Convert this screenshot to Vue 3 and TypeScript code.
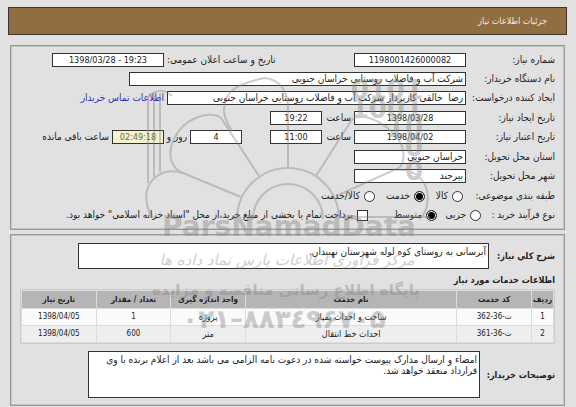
<script setup lang="ts">
import { ref } from 'vue'

interface ServiceRow {
  index: number
  code: string
  name: string
  unit: string
  amount: number
  date: string
}

const services: ServiceRow[] = [
  { index: 1, code: 'ث-36-362', name: 'ساخت و احداث پمپاژ', unit: 'پروژه', amount: 1, date: '1398/04/05' },
  { index: 2, code: 'ث-36-361', name: 'احداث خط انتقال', unit: 'متر', amount: 600, date: '1398/04/05' },
]

const subject = ref('service')
const process = ref('medium')
const treasury = ref(false)
const summary = ref('آبرسانی به روستای کوه لوله شهرستان نهبندان.')
const notes = ref(
  'امضاء و ارسال مدارک پیوست خواسته شده در دعوت نامه الزامی می باشد بعد از اعلام برنده با وی قرارداد منعقد خواهد شد.',
)
</script>

<template>
  <main class="page" dir="rtl">
    <header class="title"><h1>جزئیات اطلاعات نیاز</h1></header>

    <section class="panel details">
      <div class="group">
        <div class="row number-row">
          <label for="number">شماره نیاز:</label>
          <input id="number" class="num" value="1198001426000082" readonly />
          <label class="announce" for="announce">تاریخ و ساعت اعلان عمومی:</label>
          <input id="announce" class="num" value="1398/03/28 - 19:23" readonly />
        </div>
        <div class="row buyer-row">
          <label for="buyer">نام دستگاه خریدار:</label>
          <input id="buyer" value="شرکت آب و فاضلاب روستایی خراسان جنوبی" readonly />
        </div>
        <div class="row creator-row">
          <label for="creator">ایجاد کننده درخواست:</label>
          <input id="creator" value="رضا  خالقی کارپرداز شرکت آب و فاضلاب روستایی خراسان جنوبی" readonly />
          <a class="after" href="#contact">اطلاعات تماس خریدار</a>
        </div>
      </div>

      <div class="group">
        <div class="row time-row">
          <label for="created">تاریخ ایجاد نیاز:</label>
          <input id="created" class="num" value="1398/03/28" readonly />
          <label class="after" for="created-time">ساعت</label>
          <input id="created-time" class="num" value="19:22" readonly />
        </div>
        <div class="row time-row">
          <label for="expiry">تاریخ اعتبار نیاز:</label>
          <input id="expiry" class="num" value="1398/04/02" readonly />
          <label class="after" for="expiry-time">ساعت</label>
          <input id="expiry-time" class="num" value="11:00" readonly />
          <input id="days" class="num days" value="4" readonly />
          <label class="after" for="days">روز و</label>
          <input id="remaining" class="num remaining" value="02:49:18" readonly />
          <label class="after" for="remaining">ساعت باقی مانده</label>
        </div>
      </div>

      <div class="group">
        <div class="row place-row">
          <label for="province">استان محل تحویل:</label>
          <input id="province" value="خراسان جنوبی" readonly />
        </div>
        <div class="row place-row">
          <label for="city">شهر محل تحویل:</label>
          <input id="city" value="بیرجند" readonly />
        </div>
      </div>

      <div class="choices" role="radiogroup" aria-labelledby="subject-label">
        <span id="subject-label" class="caption wide">طبقه بندی موضوعی:</span>
        <label class="goods"><input v-model="subject" type="radio" name="subject" value="goods" />کالا</label>
        <label class="service"><input v-model="subject" type="radio" name="subject" value="service" />خدمت</label>
        <label><input v-model="subject" type="radio" name="subject" value="both" />کالا/خدمت</label>
      </div>
      <div class="choices" role="radiogroup" aria-labelledby="process-label">
        <span id="process-label" class="caption">نوع فرآیند خرید :</span>
        <label class="small"><input v-model="process" type="radio" name="process" value="small" />جزیی</label>
        <label class="medium"><input v-model="process" type="radio" name="process" value="medium" />متوسط</label>
        <label><input v-model="treasury" type="checkbox" />پرداخت تمام یا بخشی از مبلغ خرید،از محل "اسناد خزانه اسلامی" خواهد بود.</label>
      </div>
    </section>

    <section class="panel needs">
      <div class="note summary">
        <label for="summary">شرح کلي نیاز:</label>
        <textarea id="summary" v-model="summary" readonly></textarea>
      </div>
      <h2>اطلاعات خدمات مورد نیاز</h2>
      <table>
        <colgroup>
          <col class="c-index" /><col class="c-code" /><col class="c-name" />
          <col class="c-unit" /><col class="c-amount" /><col class="c-date" />
        </colgroup>
        <thead>
          <tr>
            <th>ردیف</th>
            <th>کد خدمت</th>
            <th>نام خدمت</th>
            <th>واحد اندازه گیری</th>
            <th>تعداد / مقدار</th>
            <th>تاریخ نیاز</th>
          </tr>
        </thead>
        <tbody>
          <tr v-for="s in services" :key="s.index">
            <td class="figure">{{ s.index }}</td>
            <td class="figure">{{ s.code }}</td>
            <td>{{ s.name }}</td>
            <td>{{ s.unit }}</td>
            <td class="figure">{{ s.amount }}</td>
            <td class="figure">{{ s.date }}</td>
          </tr>
        </tbody>
      </table>
      <div class="note remarks">
        <label for="notes">توضیحات خریدار:</label>
        <textarea id="notes" v-model="notes" readonly></textarea>
      </div>
    </section>

    <svg class="watermark" viewBox="0 0 576 407" aria-hidden="true">
      <g class="lines">
        <path d="M237 219a51 51 0 0 1 102 0M253 219a35 35 0 0 1 70 0" />
        <path d="M288 168V108C288 90 279 79 264 78C238 84 223 90 224 112C225 119 228 125 232 131" />
        <path d="M259 176L223 121C220 114 208 113 198 117C174 126 165 152 174 166C176 169 180 172 183 173L241 197" />
        <path d="M183 173C158 166 143 184 147 204C148 210 151 216 155 219" />
        <path d="M316 176L351 121C360 108 398 127 403 150C405 162 402 168 394 170L336 196" />
        <path d="M394 170C418 167 431 185 427 205C426 211 423 216 419 219M339 217H430" />
        <path d="M148 183V97Q160 85 172 96M154 177V95M160 172V93" />
      </g>
      <g class="bits">
        <text x="423" y="99">0101</text>
        <text x="423" y="118">1001</text>
        <text x="423" y="137">10</text>
        <text x="423" y="156">0</text>
        <text x="423" y="180">0</text>
      </g>
      <text class="brand" x="289" y="236">ParsNamadData</text>
      <text class="script" x="287" y="265">مرکز فرآوری اطلاعات پارس نماد داده ها</text>
      <text class="portal" x="286" y="295">پایگاه اطلاع رسانی مناقصه و مزایده</text>
      <text class="phone" x="284" y="328">۰۲۱–۸۸۳٤۹۶۷۰۵</text>
    </svg>
  </main>
</template>

<style>
body {
  background: #e1e1e1;
}
</style>

<style scoped>
.page {
  position: relative;
  padding: 7px 9px 0 8px;
  font-family: 'DejaVu Sans Condensed', 'DejaVu Sans', sans-serif;
  font-size: 10px;
  line-height: 14px;
  color: #222;
}
.title {
  padding: 6px 19px;
  border: 1px solid #3c3630;
  background: #916e42;
  color: #f4ece0;
}
h1,
h2 {
  margin: 0;
  font-size: 9px;
  line-height: 14px;
}
h1 {
  font-weight: 400;
}
.panel {
  margin: 0 2px;
  border: 1px solid #999;
  outline: 1px solid #c4c4c4;
  outline-offset: -2px;
}
.details {
  margin-top: 10px;
  padding: 7px 9px 7px 1px;
}
.group {
  display: grid;
  gap: 5px;
  margin-bottom: 6px;
}
.row {
  display: grid;
  white-space: nowrap;
}
.number-row {
  grid-template-columns: 89px minmax(0, 112fr) minmax(0, 190fr) minmax(0, 112fr) minmax(0, 40fr);
}
.buyer-row {
  grid-template-columns: 89px minmax(0, 337fr) minmax(0, 117fr);
}
.creator-row {
  grid-template-columns: 89px minmax(0, 299fr) minmax(0, 155fr);
}
.time-row {
  grid-template-columns:
    89px minmax(0, 112fr) minmax(0, 32fr) minmax(0, 52fr) minmax(0, 80fr) minmax(0, 26fr)
    minmax(0, 52fr) minmax(0, 100fr);
}
.place-row {
  grid-template-columns: 89px minmax(0, 112fr) minmax(0, 342fr);
}
.announce {
  padding-left: 3px;
  text-align: left;
}
.after {
  padding-right: 3px;
}
a {
  color: #3430b4;
  text-decoration: none;
}
input,
textarea {
  box-sizing: border-box;
  min-width: 0;
  margin: 0;
  border: 1px solid #333;
  border-radius: 0;
  background: #fff;
  font: inherit;
  color: #222;
}
input {
  width: 100%;
  height: 14px;
  padding: 0 2px;
}
.num {
  direction: ltr;
  text-align: center;
  font-size: 9px;
}
.days {
  padding: 0;
  margin-right: 28px;
  width: auto;
}
.remaining {
  background: #f3f3cf;
  color: #6b6b4c;
}
.choices {
  display: flex;
  align-items: center;
  height: 14px;
  margin-bottom: 5px;
  white-space: nowrap;
}
.choices:last-child {
  margin-bottom: 0;
}
.choices label {
  display: flex;
  align-items: center;
  gap: 4px;
}
.caption {
  width: 74px;
}
.wide {
  width: 92px;
}
.goods {
  width: 38px;
}
.service {
  width: 50px;
}
.small {
  width: 44px;
}
.medium {
  width: 69px;
}
input[type='radio'],
input[type='checkbox'] {
  appearance: none;
  flex: none;
  width: 11px;
  height: 11px;
  padding: 0;
}
input[type='radio'] {
  border-radius: 50%;
}
input[type='radio']:checked {
  background: #000;
  box-shadow: inset 0 0 0 1px #fff;
}
input[type='checkbox']:checked {
  background: #333;
}
.needs {
  margin-top: 4px;
  padding: 8px 9px 7px 9px;
}
.note {
  display: grid;
  align-items: center;
  gap: 3px;
}
.note label {
  font-size: 9px;
}
.note label,
h2 {
  font-weight: 700;
}
.summary {
  grid-template-columns: 63px minmax(0, 1fr);
  padding-left: 58px;
}
.remarks {
  grid-template-columns: 72px minmax(0, 1fr);
  padding-left: 68px;
  margin-top: 7px;
}
textarea {
  width: 100%;
  padding: 2px;
  line-height: 11px;
  resize: none;
  overflow: hidden;
}
.summary textarea {
  height: 26px;
}
.remarks textarea {
  height: 47px;
}
h2 {
  margin: 4px 0 2px;
}
table {
  width: 100%;
  table-layout: fixed;
  border: 1px solid #ccc;
  border-spacing: 1px;
  background: #dcdcdc;
  font-size: 9px;
}
.c-index {
  width: 4%;
}
.c-code,
.c-unit,
.c-amount {
  width: 14%;
}
.c-name {
  width: 40%;
}
.c-date {
  width: 14%;
}
th,
td {
  padding: 0;
  text-align: center;
  white-space: nowrap;
}
th,
.figure {
  font-size: 8px;
}
th {
  height: 17px;
  background: #b5b5b5;
}
td {
  height: 16px;
  background: #fafafa;
}
tr:nth-child(2) td {
  background: #eee;
}
.watermark {
  position: absolute;
  top: 0;
  left: 0;
  width: 100%;
  pointer-events: none;
  opacity: 0.4;
  fill: #858585;
}
.watermark text {
  text-anchor: middle;
}
.lines {
  fill: none;
  stroke: #858585;
  stroke-width: 2;
}
.watermark .bits {
  direction: ltr;
  font: 700 26px 'DejaVu Sans', sans-serif;
}
.watermark .bits text {
  text-anchor: end;
}
.brand {
  font: 700 28px 'DejaVu Sans', sans-serif;
}
.script {
  font: italic 15px 'DejaVu Sans', sans-serif;
}
.portal {
  font: 700 15px 'DejaVu Sans', sans-serif;
}
.phone {
  direction: ltr;
  unicode-bidi: bidi-override;
  font: 700 26px 'DejaVu Sans', sans-serif;
}
</style>
